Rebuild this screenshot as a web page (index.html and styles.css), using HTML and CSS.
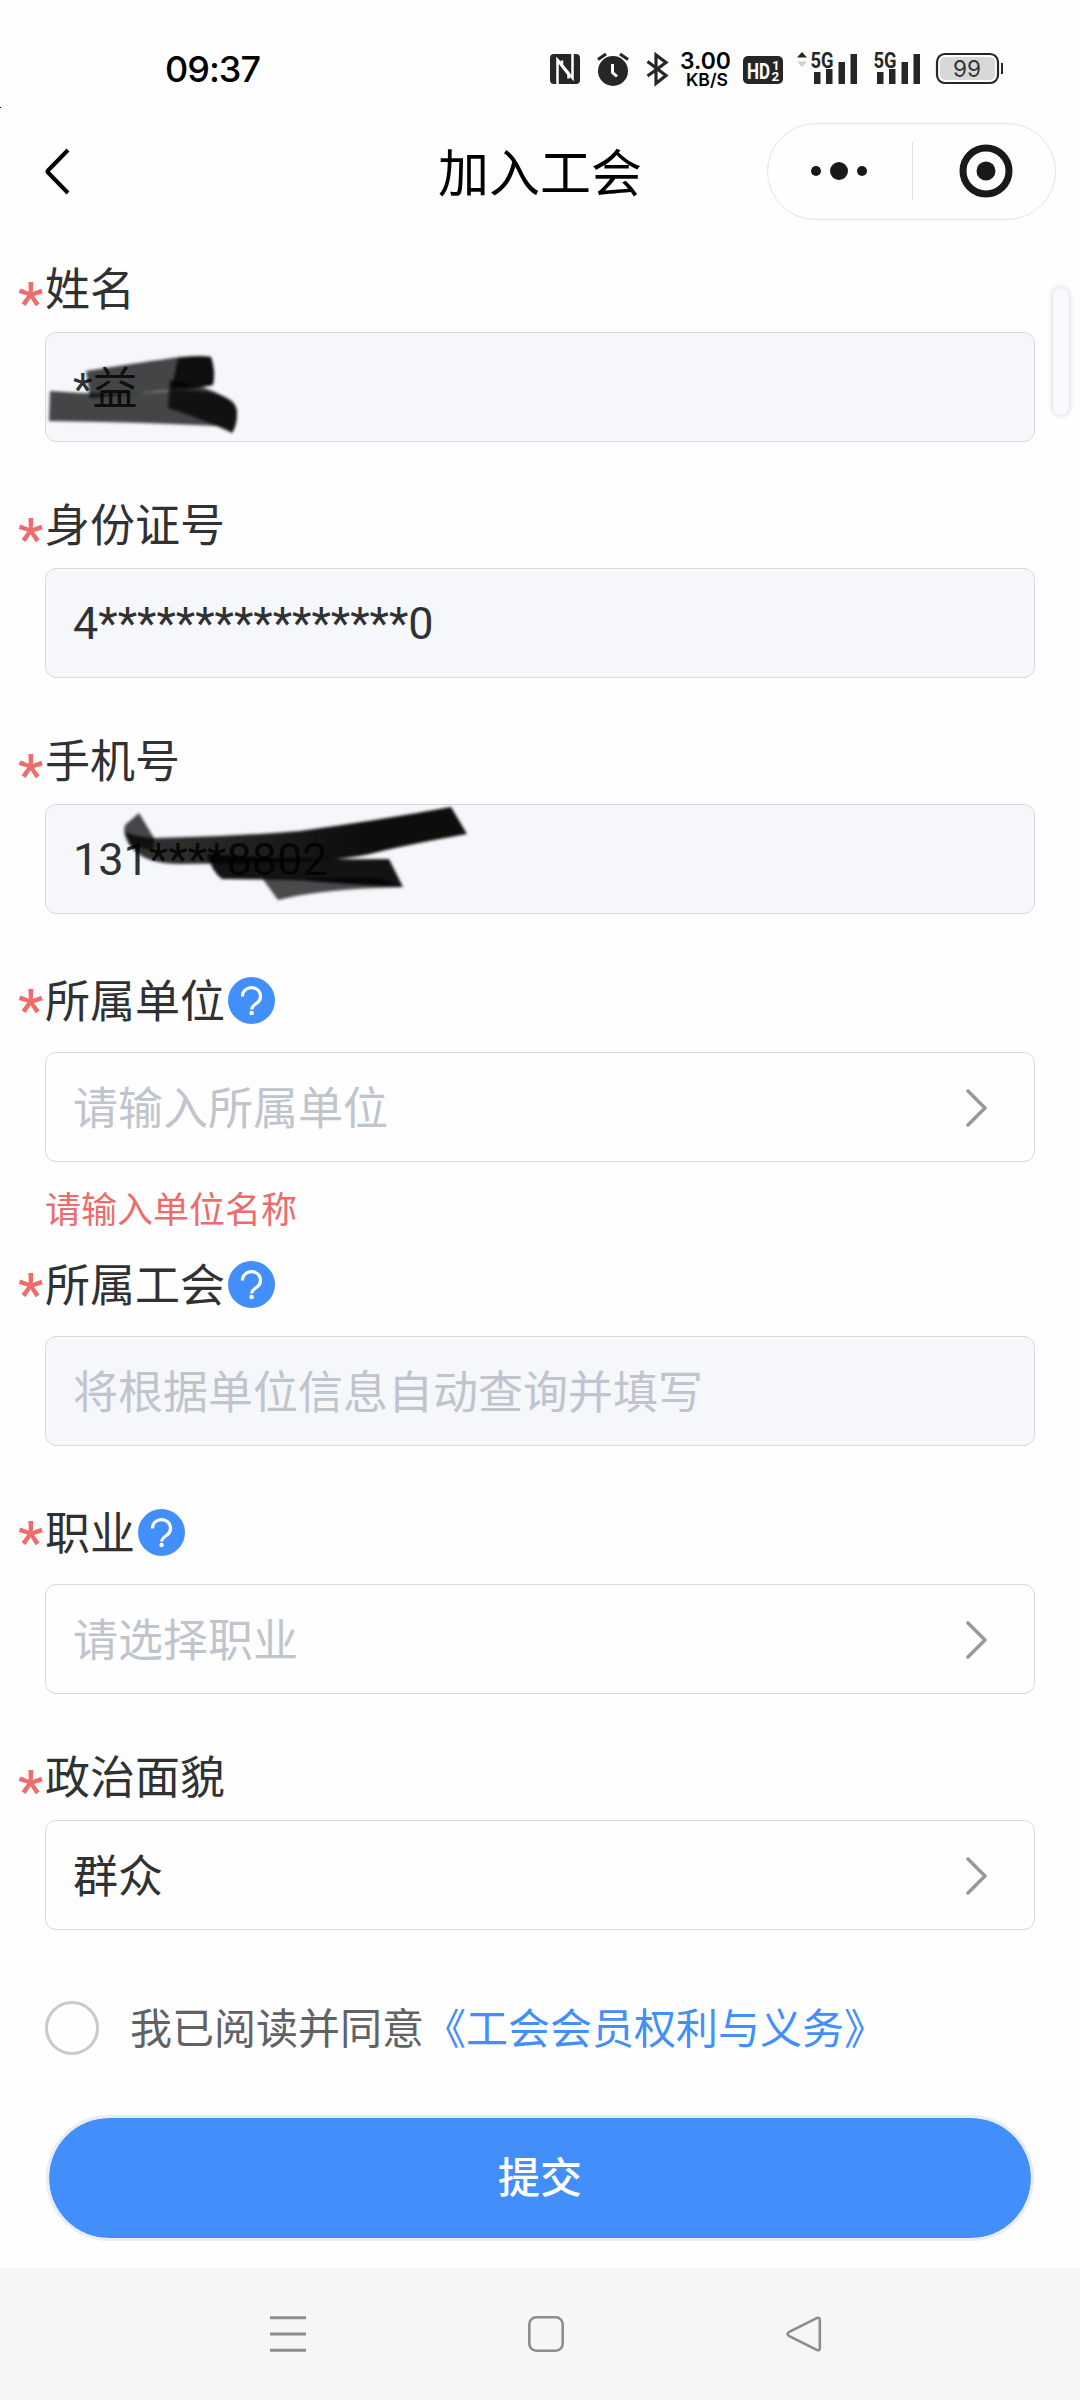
FILE: index.html
```html
<!DOCTYPE html>
<html lang="zh-CN">
<head>
<meta charset="utf-8">
<title>加入工会</title>
<link rel="stylesheet" href="styles.css">
</head>
<body>
<div class="screen">
  <span class="speck"></span>
  <header class="status-bar">
    <span class="time">09:37</span>
    <svg class="status-icons" width="456" height="60" viewBox="549 40 456 60">
      <!-- NFC -->
      <rect x="550" y="54" width="30" height="30" rx="4" fill="#262626"/>
      <path d="M557.500 84V60l11 13v5.500M572.500 54v24l-10.500-12v-5.500" fill="none" stroke="#fff" stroke-width="2.500"/>
      <path d="M557.500 60l13 17" stroke="#fff" stroke-width="2.500"/>
      <!-- alarm -->
      <circle cx="613" cy="71" r="15" fill="#262626"/>
      <path d="M598 59.500l8-5.500M628 59.500l-8-5.500" stroke="#262626" stroke-width="3.200"/>
      <path d="M612.500 64v8.500l4.500 4" fill="none" stroke="#fff" stroke-width="3"/>
      <!-- bluetooth -->
      <path d="M647.500 61.500l18.500 14-10 8V55l10 7.500-18.500 13.500" fill="none" stroke="#262626" stroke-width="3.200"/>
      <text x="680" y="69" class="rate" textLength="51" lengthAdjust="spacingAndGlyphs">3.00</text>
      <text x="686" y="86" class="unit" textLength="42" lengthAdjust="spacingAndGlyphs">KB/S</text>
      <!-- HD -->
      <rect x="743" y="56" width="40" height="28" rx="5" fill="#262626"/>
      <text x="747" y="78.500" class="hd" textLength="23" lengthAdjust="spacingAndGlyphs">HD</text>
      <text x="772" y="69.500" class="sim">1</text>
      <text x="771.500" y="81" class="sim">2</text>
      <!-- signal, first card -->
      <path d="M797 57.500l5-5.500 5 5.500z" fill="#262626"/>
      <path d="M797 61.500l5 5.500 5-5.500z" fill="#d0d0d0"/>
      <text x="810.500" y="67.500" class="net" textLength="23" lengthAdjust="spacingAndGlyphs">5G</text>
      <path d="M814 72h6.500v12H814zM826 69h6.500v15H826zM838.500 62h6.500v22h-6.500zM850.500 54h6.500v30h-6.500z" fill="#262626"/>
      <!-- signal, second card -->
      <text x="873.500" y="67.500" class="net" textLength="23" lengthAdjust="spacingAndGlyphs">5G</text>
      <path d="M877 72h6.500v12H877zM889 69h6.500v15H889zM901.500 62h6.500v22h-6.500zM913.500 54h6.500v30h-6.500z" fill="#262626"/>
      <!-- battery -->
      <rect x="937" y="54" width="61" height="29" rx="8" fill="#fff" stroke="#262626" stroke-width="2.200"/>
      <rect x="940" y="57" width="55" height="23" rx="5" fill="#d8d8d8"/>
      <rect x="1001" y="63" width="2" height="11" fill="#262626"/>
      <text x="953" y="77" class="level" textLength="28" lengthAdjust="spacingAndGlyphs">99</text>
    </svg>
  </header>

  <nav class="title-bar">
    <svg class="back" width="26" height="48" viewBox="0 0 26 48"><path d="M23 2L3 22.500q-1 1 0 2L23 45" fill="none" stroke="#000" stroke-width="4"/></svg>
    <h1 class="title">加入工会</h1>
    <div class="capsule">
      <svg width="60" height="20" viewBox="0 0 60 20" fill="#191919"><circle cx="7" cy="10" r="5"/><circle cx="30" cy="10" r="9"/><circle cx="53" cy="10" r="5"/></svg>
      <span class="divider"></span>
      <svg width="54" height="54" viewBox="0 0 54 54"><circle cx="27" cy="27" r="23" fill="none" stroke="#191919" stroke-width="7"/><circle cx="27" cy="27" r="9.500" fill="#191919"/></svg>
    </div>
  </nav>

  <main class="form">
    <section class="item">
      <div class="label"><i class="star">*</i><span>姓名</span></div>
      <div class="field filled"><span class="value">*益</span>
        <svg class="scribble" viewBox="45 332 990 110">
          <g filter="url(#soft)">
            <path d="M86 371Q150 361 180 357Q200 355 211 357Q216 372 213 385Q190 390 160 391L90 398Z" fill="#000" opacity=".72"/>
            <path d="M178 358Q200 355 211 357Q216 372 213 385Q200 388 172 387Z" fill="#000" opacity=".8"/>
            <path d="M50 391Q110 396 170 391Q205 388 225 397Q237 402 237 412Q237 426 232 433Q228 428 218 426Q140 422 49 421Z" fill="#000" opacity=".72"/>
            <path d="M170 380L205 388Q237 400 237 412Q237 426 232 433Q200 418 168 408Z" fill="#000" opacity=".75"/>
          </g>
        </svg>
      </div>
    </section>

    <section class="item">
      <div class="label"><i class="star">*</i><span>身份证号</span></div>
      <div class="field filled"><span class="value number">4****************0</span></div>
    </section>

    <section class="item">
      <div class="label"><i class="star">*</i><span>手机号</span></div>
      <div class="field filled"><span class="value number">131****8802</span>
        <svg class="scribble" viewBox="45 804 990 110">
          <g filter="url(#soft)">
            <path d="M139 813L125 825Q122 834 130 846L153 850L154 838Z" fill="#000" opacity=".72"/>
            <path d="M125 832Q140 838 157 838Q230 837 300 831Q380 820 451 807L467 834Q400 846 370 854Q330 862 270 862Q220 864 180 864Q145 864 132 848Z" fill="url(#ink)"/>
            <path d="M207 854Q280 860 389 859L403 887Q340 884 300 880L222 879Q212 872 207 854Z" fill="#000" opacity=".92"/>
            <path d="M262 878L278 900Q320 889 402 887L380 878Z" fill="#000" opacity=".7"/>
          </g>
        </svg>
      </div>
    </section>

    <section class="item roomy">
      <div class="label"><i class="star">*</i><span>所属单位</span>
        <svg class="help" viewBox="0 0 47 47"><use href="#help"/></svg></div>
      <div class="field"><span class="hint">请输入所属单位</span>
        <svg class="arrow" viewBox="0 0 22 38"><use href="#arrow"/></svg></div>
      <p class="error">请输入单位名称</p>
    </section>

    <section class="item roomy after-error">
      <div class="label"><i class="star">*</i><span>所属工会</span>
        <svg class="help" viewBox="0 0 47 47"><use href="#help"/></svg></div>
      <div class="field filled"><span class="hint">将根据单位信息自动查询并填写</span></div>
    </section>

    <section class="item roomy">
      <div class="label"><i class="star">*</i><span>职业</span>
        <svg class="help" viewBox="0 0 47 47"><use href="#help"/></svg></div>
      <div class="field"><span class="hint">请选择职业</span>
        <svg class="arrow" viewBox="0 0 22 38"><use href="#arrow"/></svg></div>
    </section>

    <section class="item">
      <div class="label"><i class="star">*</i><span>政治面貌</span></div>
      <div class="field"><span class="value">群众</span>
        <svg class="arrow" viewBox="0 0 22 38"><use href="#arrow"/></svg></div>
    </section>

    <div class="agree">
      <span class="radio"></span>
      <span class="terms">我已阅读并同意<a class="link">《工会会员权利与义务》</a></span>
    </div>

    <button class="submit">提交</button>
  </main>

  <footer class="system-nav">
    <svg width="36" height="36" viewBox="0 0 36 36"><path d="M0 1.700h36M0 18h36M0 34.300h36" stroke="#8d8d8d" stroke-width="3"/></svg>
    <svg width="36" height="36" viewBox="0 0 36 36"><rect x="1.300" y="1.300" width="33.400" height="33.400" rx="7" fill="none" stroke="#8d8d8d" stroke-width="2.600"/></svg>
    <svg width="36" height="36" viewBox="0 0 36 36"><path d="M31.200 1.900L2.800 16.200q-2.400 1.800 0 3.600L31.200 34.100q2.600.8 2.600-2V3.900q0-2.800-2.600-2z" fill="none" stroke="#8d8d8d" stroke-width="2.600"/></svg>
  </footer>

  <span class="side-handle"></span>
</div>

<svg class="defs" width="0" height="0">
  <defs>
    <filter id="soft" x="-5%" y="-10%" width="110%" height="120%"><feGaussianBlur stdDeviation="1.800"/></filter>
    <linearGradient id="ink" x1="0" x2="1"><stop offset="0" stop-opacity=".78"/><stop offset=".4" stop-opacity=".88"/><stop offset=".7" stop-opacity=".95"/></linearGradient>
    <g id="help"><circle cx="23.500" cy="23.500" r="23.500" fill="#428ffc"/><path d="M14.500 19.500a9 8.600 0 1 1 14.500 6.500q-5.300 3.500-5.300 6.500" fill="none" stroke="#fff" stroke-width="3.200"/><circle cx="23.600" cy="36" r="2.300" fill="#fff"/></g>
    <path id="arrow" d="M2 2l17 17L2 36" fill="none" stroke="#999" stroke-width="3.600" stroke-linecap="round" stroke-linejoin="round"/>
  </defs>
</svg>
</body>
</html>
```
FILE: styles.css
```css
* { box-sizing: border-box; }

body {
  margin: 0;
  background: #fefefe;
  color: #303133;
  font-family: Roboto, "Noto Sans CJK SC", sans-serif;
}

.screen {
  position: relative;
  display: flex;
  flex-direction: column;
  width: 1080px;
  height: 2400px;
  overflow: hidden;
}

.speck {
  position: absolute;
  top: 107px;
  left: 0;
  width: 1px;
  height: 1px;
  background: #000;
}

.status-bar {
  display: flex;
  justify-content: space-between;
  align-items: center;
  height: 113px;
  padding: 24px 75px 0 165px;
}

.time {
  color: #000;
  font: 500 36px/40px Inter, sans-serif;
  letter-spacing: -1px;
}

.status-icons { margin-top: 2px; font-family: Inter, sans-serif; }
.rate { font-size: 23px; font-weight: 600; }
.unit { font-size: 17.500px; font-weight: 600; }
.hd { font: 700 22px Roboto, sans-serif; fill: #fff; }
.sim { font: 700 13.500px Roboto, sans-serif; fill: #fff; }
.net { font: 700 21.500px Roboto, sans-serif; fill: #262626; }
.level { font-size: 23px; fill: #333; }

.title-bar {
  display: grid;
  grid-template-columns: 1fr auto 1fr;
  align-items: center;
  height: 118px;
  padding: 0 24px 0 45px;
}

.title {
  margin: 0;
  padding: 6px 21px 0 0;
  color: #000;
  font-size: 51px;
  font-weight: 400;
  line-height: 70px;
}

.capsule {
  display: flex;
  justify-content: space-between;
  align-items: center;
  justify-self: end;
  width: 289px;
  height: 97px;
  margin-bottom: 2px;
  padding: 0 42px 0 41px;
  border: 1px solid #e4e4e4;
  border-radius: 49px;
}

.divider { width: 1px; height: 58px; margin-right: 4px; background: #e0e0e0; }

.form {
  flex: 1;
  display: flex;
  flex-direction: column;
  padding: 27px 45px 0;
}

.item { margin-bottom: 52px; }
.item.roomy { padding-top: 5px; }
.item.after-error { padding-top: 0; }
.item:has(.error) { margin-bottom: 22px; }

.label {
  display: flex;
  align-items: center;
  height: 60px;
  margin: 0 0 14px -28px;
  font-size: 45px;
  line-height: 60px;
}

.label span { padding-top: 5px; }
.roomy .label span { padding-top: 4px; }
.roomy .label { margin-bottom: 21px; }

.star {
  width: 28px;
  padding: 31px 0 0 1px;
  color: #ef6c6c;
  font-size: 57px;
  font-style: normal;
  font-weight: 500;
  line-height: 60px;
}

.roomy .star { padding-top: 20px; }

.help { width: 47px; height: 47px; margin: 0 0 1px 3px; }

.field {
  position: relative;
  display: flex;
  justify-content: space-between;
  align-items: center;
  height: 110px;
  padding: 0 46px 0 27px;
  border: 1px solid #d9d9dc;
  border-radius: 11px;
  font-size: 45px;
  line-height: 60px;
}

.filled { background: #f5f7fb; }
.value { padding-top: 5px; }
.value.number { padding-top: 1px; }
.hint { padding-top: 5px; color: #c0c4cc; }
.arrow { width: 22px; height: 38px; margin-top: 2px; }

.scribble {
  position: absolute;
  top: -1px;
  left: -1px;
  width: 990px;
  height: 110px;
}

.error {
  height: 48px;
  margin: 23px 0 0;
  padding-top: 2px;
  color: #ee6b6d;
  font-size: 36px;
  line-height: 48px;
}

.agree {
  display: flex;
  align-items: center;
  gap: 31px;
  height: 54px;
  margin: 19px 0 60px;
  color: #606266;
  font-size: 42px;
  line-height: 54px;
}

.terms { padding-top: 3px; }

.radio {
  width: 54px;
  height: 54px;
  border: 3px solid #c8c9cc;
  border-radius: 50%;
}

.link { color: #428ffc; }

.submit {
  height: 126px;
  margin: 0 1px;
  padding: 2px 0 0;
  border: 3px solid #e9ecf2;
  border-radius: 63px;
  background: #428ffc;
  background-clip: padding-box;
  color: #fff;
  font: 500 42px/60px Roboto, "Noto Sans CJK SC", sans-serif;
}

.system-nav {
  display: flex;
  justify-content: space-between;
  height: 132px;
  padding: 48px 258px 0 270px;
  background: #f6f6f6;
}

.side-handle {
  position: absolute;
  top: 288px;
  left: 1053px;
  width: 16px;
  height: 127px;
  border-radius: 8px;
  background: #f8f9fd;
  box-shadow: 0 0 4px 2px rgba(0, 0, 0, .1);
}

.defs { position: absolute; }
```
